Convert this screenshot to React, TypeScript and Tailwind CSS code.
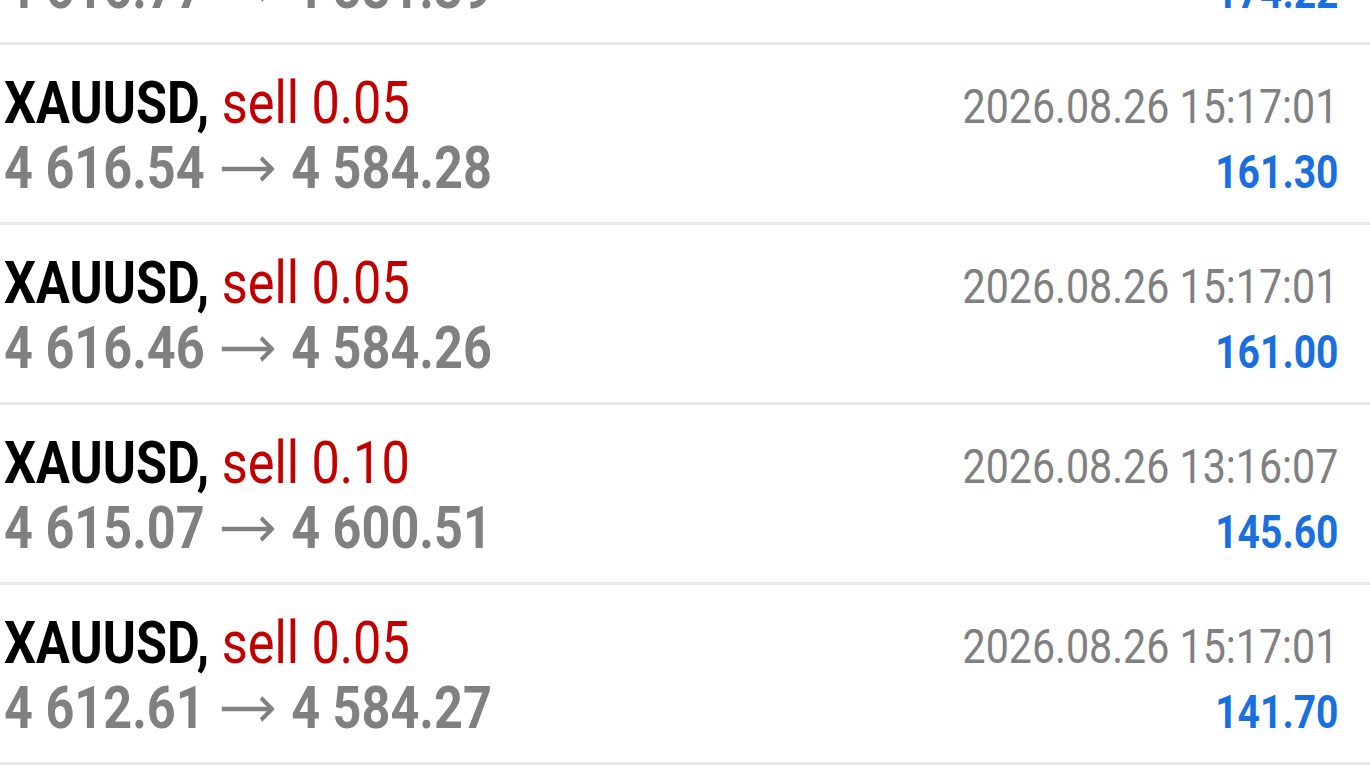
import React from "react";

type Row = { lots: string; from: string; to: string; time: string; profit: string };

const rows: Row[] = [
  { lots: "0.05", from: "4 616.77", to: "4 581.39", time: "2026.08.26 15:17:01", profit: "174.22" },
  { lots: "0.05", from: "4 616.54", to: "4 584.28", time: "2026.08.26 15:17:01", profit: "161.30" },
  { lots: "0.05", from: "4 616.46", to: "4 584.26", time: "2026.08.26 15:17:01", profit: "161.00" },
  { lots: "0.10", from: "4 615.07", to: "4 600.51", time: "2026.08.26 13:16:07", profit: "145.60" },
  { lots: "0.05", from: "4 612.61", to: "4 584.27", time: "2026.08.26 15:17:01", profit: "141.70" },
];

function Arrow() {
  return (
    <svg width="63" height="26" viewBox="0 0 63 26" className="inline-block mx-[20px] align-[6px]">
      <line x1="0" y1="13" x2="60" y2="13" stroke="#808080" strokeWidth="4.5" />
      <polyline points="47,2 60,13 47,24" fill="none" stroke="#808080" strokeWidth="4.5" />
    </svg>
  );
}

export default function App() {
  return (
    <div
      className="w-[1370px] h-[770px] overflow-hidden bg-white"
      style={{ fontFamily: "Roboto, 'Liberation Sans', sans-serif" }}
    >
      <div className="mt-[-135px]">
        {rows.map((r, i) => (
          <div key={i} className="border-b-[3px] border-[#e8e8e8]">
            <div className="pt-[25px] pb-[22px] pl-[4px] pr-[32px]">
              <div className="flex items-baseline justify-between h-[65px] leading-[65px]">
                <span className="inline-block origin-left scale-x-[0.84] text-[60px] whitespace-nowrap">
                  <span className="font-bold text-black">XAUUSD,</span>{" "}
                  <span className="text-[#c30000]">sell {r.lots}</span>
                </span>
                <span className="inline-block origin-right scale-x-[0.84] text-[49px] text-[#808080] whitespace-nowrap">
                  {r.time}
                </span>
              </div>
              <div className="flex items-baseline justify-between h-[65px] leading-[65px]">
                <span className="inline-block origin-left scale-x-[0.84] text-[60px] font-bold text-[#808080] whitespace-nowrap">
                  {r.from}
                  <Arrow />
                  {r.to}
                </span>
                <span className="inline-block origin-right scale-x-[0.83] text-[47px] font-bold text-[#1a6fe0] whitespace-nowrap">
                  {r.profit}
                </span>
              </div>
            </div>
          </div>
        ))}
      </div>
    </div>
  );
}
